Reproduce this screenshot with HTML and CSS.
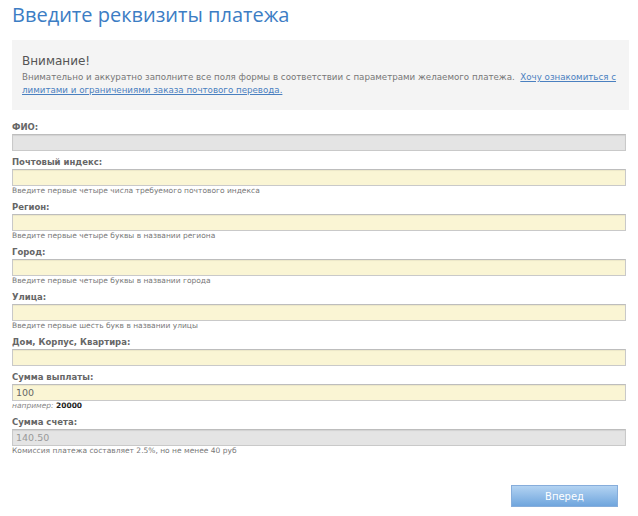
FILE: index.html
```html
<!DOCTYPE html>
<html lang="ru">
<head>
<meta charset="utf-8">
<title>Введите реквизиты платежа</title>
<link rel="stylesheet" href="styles.css">
</head>
<body>
<div class="page">
  <h1 class="title">Введите реквизиты платежа</h1>
  <div class="notice">
    <div class="notice-head">Внимание!</div>
    <p class="notice-text">Внимательно и аккуратно заполните все поля формы в соответствии с параметрами желаемого платежа.&nbsp; <a href="#" class="notice-link">Хочу ознакомиться с лимитами и ограничениями заказа почтового перевода.</a></p>
  </div>
  <form class="form">
    <div class="field">
      <label class="label">ФИО:</label>
      <div class="input input-grey"></div>
    </div>
    <div class="field">
      <label class="label">Почтовый индекс:</label>
      <div class="input input-yellow"></div>
      <div class="hint">Введите первые четыре числа требуемого почтового индекса</div>
    </div>
    <div class="field">
      <label class="label">Регион:</label>
      <div class="input input-yellow"></div>
      <div class="hint">Введите первые четыре буквы в названии региона</div>
    </div>
    <div class="field">
      <label class="label">Город:</label>
      <div class="input input-yellow"></div>
      <div class="hint">Введите первые четыре буквы в названии города</div>
    </div>
    <div class="field">
      <label class="label">Улица:</label>
      <div class="input input-yellow"></div>
      <div class="hint">Введите первые шесть букв в названии улицы</div>
    </div>
    <div class="field">
      <label class="label">Дом, Корпус, Квартира:</label>
      <div class="input input-yellow"></div>
    </div>
    <div class="field">
      <label class="label">Сумма выплаты:</label>
      <div class="input input-yellow"><span class="value">100</span></div>
      <div class="hint"><span class="example">например:</span> <b class="example-val">20000</b></div>
    </div>
    <div class="field">
      <label class="label">Сумма счета:</label>
      <div class="input input-grey"><span class="value value-dim">140.50</span></div>
      <div class="hint">Комиссия платежа составляет 2.5%, но не менее 40 руб</div>
    </div>
    <div class="actions">
      <button type="button" class="btn">Вперед</button>
    </div>
  </form>
</div>
</body>
</html>
```
FILE: styles.css
```css
* { box-sizing: border-box; }
html, body { margin: 0; padding: 0; background: #fff; }
body { font-family: "DejaVu Sans", Verdana, sans-serif; color: #666; }
.page { width: 617px; margin-left: 12px; }
.title {
  margin: 2px 0 0 0;
  font-family: "Open Sans", "DejaVu Sans", sans-serif;
  font-size: 20px;
  line-height: 25px;
  font-weight: normal;
  color: #3c7dc4;
}
.notice {
  margin-top: 13px;
  height: 70px;
  background: #f4f4f4;
  padding: 14px 10px 0 10px;
}
.notice-head {
  font-size: 12px;
  line-height: 15px;
  color: #555;
}
.notice-text {
  margin: 2px 0 0 0;
  font-size: 8.7px;
  line-height: 13px;
  color: #777;
}
.notice-link { color: #4a80c0; text-decoration: underline; }
.form { margin-top: 10px; }
.field { margin-bottom: 4px; }
.label {
  display: block;
  font-size: 8.5px;
  line-height: 14px;
  font-weight: bold;
  color: #666;
}
.input {
  width: 614px;
  height: 17px;
  border: 1px solid #c9c9c9;
  border-top-color: #bdbdbd;
  padding: 0 3px;
  font-size: 9.5px;
  line-height: 15px;
}
.input-grey { background: #e4e4e4; box-shadow: inset 0 1px 1px rgba(0,0,0,0.08); }
.input-yellow { background: #faf5d4; box-shadow: inset 0 1px 1px rgba(0,0,0,0.06); }
.value { color: #666; }
.value-dim { color: #999; }
.hint {
  font-size: 7.5px;
  line-height: 10px;
  color: #777;
}
.example { font-style: italic; color: #888; }
.example-val { color: #222; }
.actions {
  display: flex;
  justify-content: flex-end;
  padding-right: 11px;
  margin-top: 29px;
}
.btn {
  width: 107px;
  height: 22px;
  border: 1px solid #86addb;
  background: linear-gradient(#b3d3f2, #6fa5dd);
  color: #fff;
  font-family: "DejaVu Sans", Verdana, sans-serif;
  font-size: 10px;
  font-weight: normal;
  padding: 0;
  cursor: pointer;
}
```
